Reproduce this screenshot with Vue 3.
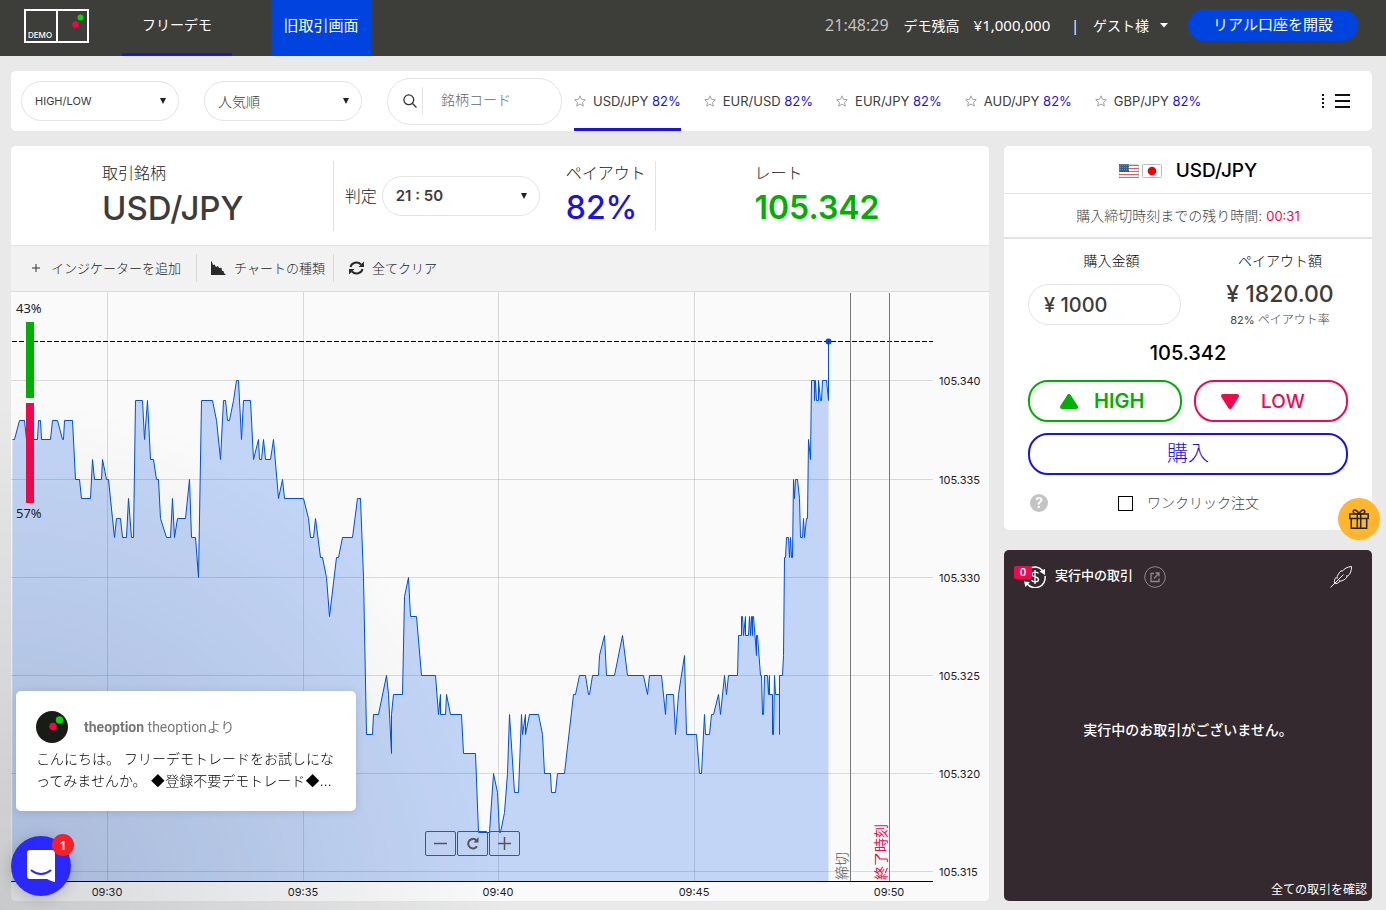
<script setup>
import { ref } from 'vue'

const pairs = ['USD/JPY', 'EUR/USD', 'EUR/JPY', 'AUD/JPY', 'GBP/JPY']
const amount = ref('¥ 1000')
const query = ref('')
const oneClick = ref(false)

// Plot space: x runs LEFT..LEFT+WIDTH, prices are thousandths above 105.
const LEFT = 11
const WIDTH = 922
const HEIGHT = 589
const yOf = (p) => Math.floor(88.9 + (340 - p) * 19.62) + 0.5

const series = `12 337,14 337,19 338,24 338,26 337,37 337,38 338,40 338,41 337,50 337,52 338,57 338,62 337,63 337,64 338,72 338,
75 335,79 335,81 334,90 334,92 336,94 335,101 335,102 336,106 335,108 335,112 333,114 332,116 333,120 333,122 332,126 332,128 334,
131 332,133 332,135 339,142 339,144 337,147 339,150 336,153 336,156 335,158 335,160 333,166 332,170 332,172 334,174 332,177 333,
185 333,189 335,191 332,195 332,198 330,201 339,212 339,216 338,220 336,223 339,225 339,227 338,229 338,233 339,236 340,238 340,
241 337,243 339,250 339,253 336,258 337,259 336,261 336,263 337,265 336,270 336,273 337,278 334,282 335,284 334,303 334,308 333,
310 332,313 332,315 333,320 331,322 331,326 330,329 328,336 331,338 331,342 332,352 332,357 334,360 334,363 330,366 322,372 322,
373 323,378 323,386 325,388 324,391 321,391 323,393 324,402 324,404 329,408 330,410 328,416 328,421 325,435 325,438 323,440 324,
440 323,445 323,446 324,450 323,461 323,463 321,475 321,478 317,489 317,493 320,497 319,499 317,500 317,504 318,507 320,509 323,
514 319,518 319,521 323,522 322,525 323,525 322,529 323,538 323,542 322,544 320,550 320,551 319,555 319,557 320,564 320,573 324,
575 324,579 325,585 325,588 324,589 324,592 325,598 325,599 326,604 327,606 325,614 325,622 327,627 325,643 325,647 324,649 325,
661 325,665 323,666 324,673 324,675 322,678 324,684 326,686 322,696 322,699 320,701 320,704 323,705 322,709 322,711 323,713 323,
718 324,720 323,724 325,726 324,728 325,737 325,738 327,741 327,741 328,742 328,743 327,745 328,745 327,748 327,749 328,750 327,
751 328,752 327,752 328,753 328,756 326,756 327,757 327,760 325,761 325,762 323,763 323,764 325,767 325,768 324,769 325,769 324,
772 324,772 322,773 322,774 325,775 324,779 324,779 322,779 325,782 325,783 326,784 331,785 331,786 332,788 332,789 331,790 332,
791 331,792 331,793 335,794 334,795 335,797 335,799 334,800 332,802 332,803 333,804 332,806 333,807 333,808 337,810 336,811 340,
814 340,814 339,815 340,816 339,818 339,818 340,820 339,821 339,822 340,826 340,828 339,828 342`
  .split(',')
  .map((s) => s.trim().split(' ').map(Number))

const line = series.map(([x, p]) => `${x + 0.5},${yOf(p)}`).join(' ')
const area = `12,${HEIGHT} ${series.slice(0, -1).map(([x, p]) => `${x + 0.5},${yOf(p)}`).join(' ')} 828.5,${HEIGHT}`

const prices = [340, 335, 330, 325, 320, 315]
const times = [
  { x: 107, label: '09:30' },
  { x: 303, label: '09:35' },
  { x: 498, label: '09:40' },
  { x: 694, label: '09:45' },
  { x: 889, label: '09:50' },
]
const marks = [
  { x: 850, label: '締切', kind: 'close' },
  { x: 889, label: '終了時刻', kind: 'end' },
]
const left = (x) => ({ left: `${((x - LEFT) / WIDTH) * 100}%` })
const top = (p) => ({ top: `${(yOf(p) / HEIGHT) * 100}%` })
</script>

<template>
  <div class="page">
    <header class="topbar">
      <a href="#" class="logo" aria-label="theoption demo">
        <svg width="65" height="34" viewBox="0 0 65 34">
          <rect x="1" y="1" width="63" height="32" fill="none" stroke="#fff" stroke-width="2" />
          <path d="M33 1v32" stroke="#fff" stroke-width="2" />
          <circle cx="51.500" cy="15.500" r="3.200" fill="#ff0046" />
          <circle cx="56.500" cy="8.500" r="3" fill="#00dc00" />
          <text x="4" y="29" class="logo-text">DEMO</text>
        </svg>
      </a>
      <nav class="nav">
        <a href="#" class="nav-demo">フリーデモ</a>
        <a href="#" class="nav-old">旧取引画面</a>
      </nav>
      <div class="account">
        <span class="clock">21:48:29</span>
        <span>デモ残高</span>
        <span class="balance">¥1,000,000</span>
        <span class="bar">|</span>
        <button class="guest" type="button">
          ゲスト様
          <svg width="8" height="5" viewBox="0 0 8 5"><path d="M0 0h8L4 4.500z" fill="#fff" /></svg>
        </button>
        <a href="#" class="open-account">リアル口座を開設</a>
      </div>
    </header>

    <main class="main">
      <section class="filters">
        <label class="pill">
          <select aria-label="取引の種類"><option>HIGH/LOW</option></select>
          <svg class="arrow" width="6" height="6" viewBox="0 0 6 6"><path d="M0 0h6L3 6z" fill="#222" /></svg>
        </label>
        <label class="pill sort">
          <select aria-label="並び順"><option>人気順</option></select>
          <svg class="arrow" width="6" height="6" viewBox="0 0 6 6"><path d="M0 0h6L3 6z" fill="#222" /></svg>
        </label>
        <label class="search">
          <svg width="14" height="14" viewBox="0 0 14 14" fill="none" stroke="#333" stroke-width="1.300">
            <circle cx="5.800" cy="5.800" r="4.900" /><path d="M9.500 9.500L13.500 13.500" />
          </svg>
          <input v-model="query" type="text" placeholder="銘柄コード" aria-label="銘柄コード" />
        </label>
        <nav class="tabs">
          <a v-for="(p, i) in pairs" :key="p" href="#" class="tab" :class="{ active: i === 0 }">
            <svg width="12" height="12" viewBox="0 0 12 12">
              <path d="M6 .8l1.500 3.500 3.800.4-2.800 2.600.8 3.800L6 9.100l-3.300 2 .8-3.800L.7 4.700l3.800-.4z" fill="none" stroke="#a2a2a2" />
            </svg>
            <span>{{ p }} <b>82%</b></span>
          </a>
        </nav>
        <button class="menu" type="button" aria-label="メニュー">
          <svg width="29" height="14" viewBox="0 0 29 14" fill="#111">
            <path d="M1 0h2v2H1zM1 4h2v2H1zM1 8h2v2H1zM1 12h2v2H1zM14 0h15v2H14zM14 6h15v2H14zM14 12h15v2H14z" />
          </svg>
        </button>
      </section>

      <div class="columns">
        <section class="chart-card">
          <div class="summary">
            <div class="cell pair">
              <span class="cap">取引銘柄</span>
              <strong>USD/JPY</strong>
            </div>
            <div class="cell expiry">
              <label for="expiry" class="cap">判定</label>
              <div class="pill time">
                <select id="expiry"><option>21 : 50</option></select>
                <svg class="arrow" width="6" height="6" viewBox="0 0 6 6"><path d="M0 0h6L3 6z" fill="#222" /></svg>
              </div>
              <div class="payout">
                <span class="cap">ペイアウト</span>
                <strong>82%</strong>
              </div>
            </div>
            <div class="cell rate">
              <span class="cap">レート</span>
              <strong>105.342</strong>
            </div>
          </div>

          <div class="tools">
            <button type="button" class="indicator">
              <svg width="8" height="8" viewBox="0 0 8 8"><path d="M4 0v8M0 4h8" stroke="#333" /></svg>
              インジケーターを追加
            </button>
            <button type="button" class="kind">
              <svg width="15" height="14" viewBox="0 0 15 14">
                <path d="M0 0l1 1 1 3 1.500-.5L5 6l2-1 1 2 2.500-.3.500 3 1.500.3.500 2L15 14H0z" fill="#2a2a2a" />
              </svg>
              チャートの種類
            </button>
            <button type="button" class="clear">
              <svg width="15" height="14" viewBox="0 0 15 14" fill="none" stroke="#2a2a2a" stroke-width="2">
                <path d="M1.500 6A6 5.500 0 0 1 12 3.500M13.500 8A6 5.500 0 0 1 3 10.500" />
                <path d="M15 .5V6H9.500zM0 13.500V8h5.500z" fill="#2a2a2a" stroke="none" />
              </svg>
              全てクリア
            </button>
          </div>

          <div class="chart">
            <div class="plot">
              <svg class="graph" :viewBox="`${LEFT} 0 ${WIDTH} ${HEIGHT}`" preserveAspectRatio="none" role="img" aria-label="USD/JPY">
                <g class="grid">
                  <line v-for="p in prices" :key="p" x1="11" x2="933" :y1="yOf(p)" :y2="yOf(p)" />
                  <line v-for="t in times.slice(0, 4)" :key="t.x" :x1="t.x + 0.5" :x2="t.x + 0.5" y1="0" y2="589" />
                </g>
                <polygon :points="area" fill="#0050e6" fill-opacity="0.22" />
                <polyline :points="line" class="price-line" />
                <line class="now" x1="12" x2="933" :y1="yOf(342)" :y2="yOf(342)" />
                <line v-for="m in marks" :key="m.x" class="mark" :x1="m.x + 0.5" :x2="m.x + 0.5" y1="1" y2="589" />
                <circle cx="828.500" :cy="yOf(342)" r="3" fill="#0046dc" />
              </svg>
              <span v-for="m in marks" :key="m.label" class="mark-label" :class="m.kind" :style="left(m.x)">{{ m.label }}</span>
              <div class="sentiment">
                <span>43%</span>
                <i class="up"></i>
                <i class="down"></i>
                <span>57%</span>
              </div>
              <div class="zoom">
                <button type="button" aria-label="縮小">
                  <svg width="13" height="13" viewBox="0 0 13 13"><path d="M0 6.500h13" stroke="#555" stroke-width="1.500" /></svg>
                </button>
                <button type="button" aria-label="リセット">
                  <svg width="13" height="13" viewBox="0 0 13 13">
                    <path d="M10.300 3.200A4.800 4.800 0 1 0 11 9.300" fill="none" stroke="#555" stroke-width="2" />
                    <path d="M12.500 0v5.500H7.500z" fill="#555" />
                  </svg>
                </button>
                <button type="button" aria-label="拡大">
                  <svg width="13" height="13" viewBox="0 0 13 13"><path d="M0 6.500h13M6.500 0v13" stroke="#555" stroke-width="1.500" /></svg>
                </button>
              </div>
            </div>
            <div class="prices">
              <span v-for="p in prices" :key="p" :style="top(p)">105.{{ p }}</span>
            </div>
            <div class="times">
              <span v-for="t in times" :key="t.x" :style="left(t.x)">{{ t.label }}</span>
            </div>
          </div>
        </section>

        <aside class="side">
          <section class="order">
            <h2>
              <span class="flags">
                <svg width="20" height="14" viewBox="0 0 20 14">
                  <rect width="20" height="14" rx="1" fill="#fff" />
                  <path d="M0 1.500h20M0 4.500h20M0 7.500h20M0 10.500h20M0 13.500h20" stroke="#ee5560" />
                  <rect width="10" height="8" fill="#3a5a8c" />
                  <path d="M1 1.500h9M1 3.500h9M1 5.500h9" stroke="#7389ae" stroke-dasharray="1 1" />
                  <rect x=".5" y=".5" width="19" height="13" rx="1" fill="none" stroke="#999" stroke-opacity=".4" />
                </svg>
                <svg width="20" height="14" viewBox="0 0 20 14">
                  <rect x=".5" y=".5" width="19" height="13" rx="1" fill="#fff" stroke="#bbb" />
                  <circle cx="10" cy="7" r="4.300" fill="#f00000" />
                </svg>
              </span>
              USD/JPY
            </h2>
            <p class="countdown">購入締切時刻までの残り時間: <b>00:31</b></p>
            <div class="form">
              <div class="amounts">
                <div class="buy">
                  <label for="amount">購入金額</label>
                  <input id="amount" v-model="amount" type="text" />
                </div>
                <div class="return">
                  <span>ペイアウト額</span>
                  <strong>¥ 1820.00</strong>
                  <small><em>82%</em> ペイアウト率</small>
                </div>
              </div>
              <p class="quote">105.342</p>
              <div class="choices">
                <button type="button" class="high">
                  <svg width="18" height="15" viewBox="0 0 18 15"><path d="M9 2L16 13H2z" fill="#00af00" stroke="#00af00" stroke-width="4" stroke-linejoin="round" /></svg>
                  HIGH
                </button>
                <button type="button" class="low">
                  <svg width="18" height="15" viewBox="0 0 18 15"><path d="M9 13L16 2H2z" fill="#f2084e" stroke="#f2084e" stroke-width="4" stroke-linejoin="round" /></svg>
                  LOW
                </button>
              </div>
              <button type="button" class="purchase">購入</button>
              <div class="quick">
                <button type="button" class="help" aria-label="ヘルプ">?</button>
                <label><input v-model="oneClick" type="checkbox" />ワンクリック注文</label>
              </div>
            </div>
          </section>

          <section class="positions">
            <div class="positions-head">
              <span class="open-icon">
                <svg width="22" height="22" viewBox="0 0 22 22" fill="none" stroke="#fff" stroke-width="1.500">
                  <path d="M5 2.800A10 10 0 0 1 18.500 4.500M21 10A10 10 0 0 1 3 17.500" />
                  <path d="M15.500 5.500L21 3v6zM0 15.500l6 .5-4.500 5z" fill="#fff" stroke="none" />
                  <path d="M14.500 7.500C13.500 5.500 8 5.500 8 8.500c0 3 6.500 1.800 6.500 5 0 3-6 3-7 .5M11 4v14" stroke-width="1.300" />
                </svg>
                <b>0</b>
              </span>
              <h3>実行中の取引</h3>
              <button type="button" class="popout" aria-label="別ウィンドウ">
                <svg width="22" height="22" viewBox="0 0 22 22" fill="none" stroke="#8e878b">
                  <circle cx="11" cy="11" r="10.300" />
                  <path d="M10 7.500H7v8h8v-3M10 12.500l4.500-5M11.500 7h3.500v3.500" stroke-width="1.300" />
                </svg>
              </button>
              <svg class="feather" width="22" height="22" viewBox="0 0 22 22" fill="none" stroke="#f2f2f2">
                <path d="M.5 21.500L13.500 8.500M4.500 17.500C4 15.500 4.500 13 6 11.500l1 1c0-3 2-6 4.500-8l.5 1C14 2.500 18 .7 21.500.5c.3 4-1.200 7.500-3.700 9.500l-1.300-.2.700 1.200c-2 2.500-4.500 3.800-7 4.200l-1-.7.200 1.400c-1.500 1.400-3.200 1.900-4.900 1.600z" />
              </svg>
            </div>
            <p class="empty">実行中のお取引がございません。</p>
            <a href="#" class="all">全ての取引を確認</a>
          </section>
        </aside>
      </div>
    </main>

    <div class="shade"></div>

    <button type="button" class="gift" aria-label="プレゼント">
      <svg width="20" height="20" viewBox="0 0 20 20" fill="none" stroke="#2b2415" stroke-width="1.500">
        <path d="M.8 5h18.400v4.500H.8zM2.300 9.500h15.400v9.700H2.300zM8.300 5v14M11.700 5v14" />
        <path d="M10 5C8.500 1 4.500-.2 4.200 2.500 4.100 4 5.500 5 10 5zM10 5c1.500-4 5.500-5.200 5.800-2.500C15.900 4 14.500 5 10 5z" />
      </svg>
    </button>

    <a href="#" class="message">
      <span class="from">
        <svg width="32" height="32" viewBox="0 0 32 32">
          <circle cx="16" cy="16" r="16" fill="#191b16" />
          <circle cx="17" cy="15.500" r="3.700" fill="#ff0046" />
          <circle cx="23.500" cy="9" r="3.700" fill="#00dc00" />
        </svg>
        <span><b>theoption</b> theoptionより</span>
      </span>
      <span class="body">こんにちは。 フリーデモトレードをお試しになってみませんか。 ◆登録不要デモトレード◆…</span>
    </a>

    <button type="button" class="launcher" aria-label="チャットを開く">
      <svg width="28" height="32" viewBox="0 0 28 32">
        <path d="M3 0h22a3 3 0 0 1 3 3v29s-5-1.300-8-3H3a3 3 0 0 1-3-3V3a3 3 0 0 1 3-3z" fill="#fff" />
        <path d="M4.500 20.500c5.500 4.500 13.500 4.500 19 0" fill="none" stroke="#2a28ff" stroke-width="2" stroke-linecap="round" />
      </svg>
      <span>1</span>
    </button>
  </div>
</template>

<style>
body {
  background: #e9e9e9;
}
</style>

<style scoped>
.page {
  --ui: Inter, "Noto Sans CJK JP", sans-serif;
  --jp: "Noto Sans", "Noto Sans CJK JP", sans-serif;
  --line: #e3e3e3;
  display: flex;
  flex-direction: column;
  min-height: 100vh;
  font-family: var(--ui);
  font-size: 13px;
  color: #3c3c3b;
}
.page *,
.page {
  box-sizing: border-box;
}
h2, h3, p {
  margin: 0;
  font-weight: 400;
}
a {
  color: inherit;
  text-decoration: none;
}
button, select, input {
  font: inherit;
  color: inherit;
}
button {
  padding: 0;
  border: 0;
  background: none;
  cursor: pointer;
}
svg {
  display: block;
  flex: none;
}

.topbar {
  display: flex;
  height: 56px;
  padding: 0 28px 0 24px;
  background: #3d3d3a;
  color: #fff;
  font-family: var(--jp);
}
.logo {
  padding-top: 9px;
}
.logo-text {
  font: 500 8px Inter, sans-serif;
  fill: #fff;
}
.nav {
  display: flex;
  gap: 39px;
  margin-left: 33px;
  font-size: 15px;
  line-height: 50px;
}
.nav a {
  text-align: center;
}
.nav-demo {
  width: 110px;
  border-bottom: 3px solid #1a12e8;
  font-size: 14px;
}
.nav-old {
  width: 100px;
  background: #0043df;
}
.account {
  display: flex;
  align-items: center;
  height: 50px;
  margin-left: auto;
  font-size: 14px;
  white-space: nowrap;
}
.clock {
  margin-right: 15px;
  color: #c2c2c0;
  font-size: 16px;
}
.balance {
  margin: 0 21px 0 14px;
  font-size: 15px;
}
.guest {
  display: flex;
  align-items: center;
  gap: 11px;
  margin: 0 20px 0 14px;
}
.open-account {
  width: 170px;
  height: 32px;
  border-radius: 16px;
  background: #0043df;
  font-size: 15px;
  line-height: 30px;
  text-align: center;
}

.main {
  display: flex;
  flex: 1;
  flex-direction: column;
  gap: 15px;
  padding: 15px 14px 9px 11px;
}
.filters {
  display: flex;
  align-items: center;
  height: 60px;
  padding: 0 22px 0 10px;
  border-radius: 5px;
  background: #fff;
}
.pill {
  position: relative;
  width: 158px;
  height: 40px;
}
.pill select {
  width: 100%;
  height: 100%;
  padding: 0 13px;
  border: 1px solid var(--line);
  border-radius: 20px;
  background: #fff;
  appearance: none;
  font-size: 11px;
}
.pill.sort {
  margin: 0 25px;
}
.pill.sort select {
  font-size: 14px;
  font-weight: 300;
}
.pill .arrow {
  position: absolute;
  top: 17px;
  right: 13px;
  pointer-events: none;
}
.search {
  display: flex;
  align-items: center;
  width: 175px;
  height: 47px;
  margin-right: 12px;
  padding-left: 15px;
  border: 1px solid var(--line);
  border-radius: 24px;
}
.search input {
  width: 120px;
  height: 28px;
  margin-left: 5px;
  padding: 0 0 4px 18px;
  border: 0;
  border-left: 1px solid var(--line);
  outline: 0;
  background: none;
  font-size: 14px;
}
.search input::placeholder {
  color: #666;
  font-weight: 300;
}
.tabs {
  display: flex;
  gap: 23px;
  height: 100%;
}
.tab {
  display: flex;
  align-items: center;
  gap: 7px;
  padding-top: 3px;
  border-bottom: 3px solid transparent;
  font-size: 13px;
  white-space: nowrap;
}
.tab b {
  color: #1a12e8;
  font-weight: 400;
}
.tab.active {
  border-color: #1a12e8;
}
.menu {
  margin-left: auto;
}

.columns {
  display: grid;
  flex: 1;
  grid-template-columns: minmax(0, 1fr) 368px;
  gap: 15px;
}
.chart-card {
  display: flex;
  flex-direction: column;
  overflow: hidden;
  border-radius: 5px;
  background: #fff;
}
.summary {
  display: grid;
  grid-template-columns: 33fr 33fr 34fr;
  padding: 15px 0;
  height: 99px;
}
.cell {
  display: flex;
  border-right: 1px solid var(--line);
  line-height: 24px;
}
.cap {
  display: block;
  color: #222;
  font-size: 16px;
  font-weight: 300;
}
.cell strong {
  display: block;
  font-size: 32px;
  font-weight: 500;
  line-height: 46px;
}
.pair, .rate {
  flex-direction: column;
}
.pair {
  padding-left: 91px;
}
.cell.pair strong {
  font-size: 33px;
}
.expiry {
  align-items: center;
  padding-left: 11px;
}
.time {
  flex: none;
  margin: 0 26px 0 5px;
}
.time select {
  font-size: 15px;
  font-weight: 600;
}
.payout {
  align-self: flex-start;
  white-space: nowrap;
}
.payout strong {
  color: #1a12e8;
}
.rate {
  padding-left: 98px;
  border: 0;
}
.cell.rate strong {
  color: #00af00;
  font-weight: 600;
}
.tools {
  display: flex;
  align-items: center;
  height: 47px;
  padding: 0 0 2px 21px;
  border-top: 1px solid var(--line);
  border-bottom: 1px solid #dcdcdc;
  background: #f2f2f2;
}
.tools button {
  display: flex;
  align-items: center;
  height: 28px;
  padding-right: 8px;
  border-right: 1px solid #d9d9d9;
  color: #222;
  font-weight: 300;
  white-space: nowrap;
}
.tools .indicator {
  gap: 11px;
  padding-right: 15px;
}
.tools .kind {
  gap: 8px;
  padding-left: 14px;
}
.tools .clear {
  gap: 8px;
  padding-left: 15px;
  border: 0;
}
.chart {
  display: grid;
  flex: 1;
  grid-template-columns: minmax(0, 1fr) 56px;
  grid-template-rows: minmax(0, 1fr) 19px;
  min-height: 400px;
  background: #fafafa;
  color: #222;
}
.plot {
  position: relative;
  border-bottom: 1px solid #000;
}
.graph {
  position: absolute;
  width: 100%;
  height: 100%;
}
.graph line, .graph polyline {
  vector-effect: non-scaling-stroke;
}
.grid line {
  stroke: #000;
  stroke-opacity: 0.13;
}
.price-line {
  fill: none;
  stroke: #0050dc;
  stroke-width: 1px;
}
.now {
  stroke: #000;
  stroke-dasharray: 5 2;
}
.mark {
  stroke: #777;
}
.mark-label {
  position: absolute;
  bottom: 1px;
  margin-left: -15px;
  color: #555;
  font-size: 14px;
  font-weight: 300;
  line-height: 14px;
  text-orientation: sideways;
  white-space: nowrap;
  writing-mode: vertical-rl;
  transform: rotate(180deg);
}
.mark-label.end {
  color: #f2084e;
  font-weight: 400;
}
.sentiment {
  position: absolute;
  top: 8px;
  left: 5px;
  width: 28px;
  font-family: var(--jp);
  font-size: 13px;
  line-height: 17px;
}
.sentiment i {
  display: block;
  width: 8px;
  margin: 5px 10px;
}
.sentiment .up {
  height: 76px;
  background: #00af00;
}
.sentiment .down {
  height: 100px;
  margin-bottom: 2px;
  background: #f2084e;
}
.zoom {
  position: absolute;
  right: 0;
  bottom: 25px;
  left: 1px;
  display: flex;
  justify-content: center;
  gap: 1px;
}
.zoom button {
  display: grid;
  width: 31px;
  height: 25px;
  place-items: center;
  border: 1px solid #555;
  border-radius: 2px;
}
.prices {
  position: relative;
}
.prices span {
  position: absolute;
  left: 6px;
  font-size: 11px;
  line-height: 18px;
  transform: translateY(-50%);
}
.times {
  position: relative;
}
.times span {
  position: absolute;
  top: 2px;
  font-size: 11px;
  line-height: 16px;
  transform: translateX(-50%);
}

.side {
  display: flex;
  flex-direction: column;
  gap: 20px;
}
.order {
  border-radius: 5px;
  background: #fff;
  text-align: center;
}
.order h2 {
  display: flex;
  align-items: center;
  justify-content: center;
  gap: 14px;
  height: 48px;
  padding-top: 2px;
  border-bottom: 1px solid var(--line);
  color: #000;
  font-size: 19px;
  font-weight: 500;
}
.flags {
  display: flex;
  gap: 3px;
}
.countdown {
  height: 45px;
  border-bottom: 2px solid var(--line);
  color: #444;
  font-size: 14px;
  font-weight: 300;
  line-height: 44px;
}
.countdown b {
  color: #f2084e;
  font-size: 13px;
  font-weight: 400;
}
.form {
  padding: 12px 24px 13px;
}
.amounts {
  display: flex;
  justify-content: space-between;
  color: #000;
  font-size: 14px;
  font-weight: 300;
  line-height: 20px;
}
.buy {
  width: 153px;
}
.buy label {
  display: block;
  padding-left: 14px;
  text-align: center;
}
.buy input {
  width: 100%;
  height: 41px;
  margin-top: 13px;
  padding: 1px 15px 0;
  border: 1px solid var(--line);
  border-radius: 21px;
  outline: 0;
  color: #3c3c3b;
  font-size: 20px;
  font-weight: 500;
  text-align: left;
}
.return {
  display: flex;
  flex-direction: column;
  width: 136px;
}
.return strong {
  margin-top: 8px;
  color: #3c3c3b;
  font-size: 23px;
  font-weight: 500;
  line-height: 30px;
}
.return small {
  margin-top: 1px;
  color: #444;
  font-size: 12px;
}
.return em {
  font-size: 11px;
  font-style: normal;
  font-weight: 400;
}
.quote {
  margin-top: 11px;
  color: #000;
  font-size: 20px;
  font-weight: 500;
  line-height: 24px;
}
.choices {
  display: flex;
  gap: 12px;
  margin-top: 15px;
}
.choices button {
  display: flex;
  width: 50%;
  align-items: center;
  height: 42px;
  padding-left: 30px;
  border: 2px solid #00af00;
  border-radius: 20px;
  color: #00af00;
  font-size: 20px;
  font-weight: 600;
}
.choices .high {
  gap: 16px;
}
.choices .low {
  gap: 22px;
  padding-left: 25px;
  border-color: #f2084e;
  color: #f2084e;
  font-size: 19px;
  font-weight: 500;
}
.purchase {
  display: block;
  width: 100%;
  height: 42px;
  margin-top: 11px;
  border: 2px solid #1a12e8;
  border-radius: 20px;
  padding-bottom: 2px;
  color: #1a12e8;
  font-size: 21px;
  font-weight: 300;
  line-height: 34px;
}
.quick {
  display: flex;
  align-items: center;
  height: 28px;
  margin-top: 14px;
  padding-left: 2px;
  color: #444;
  font-size: 14px;
  font-weight: 300;
}
.help {
  width: 18px;
  height: 18px;
  border-radius: 50%;
  background: #c4c4c4;
  color: #fff;
  font-size: 14px;
  font-weight: 600;
  line-height: 18px;
}
.quick label {
  display: flex;
  align-items: center;
  gap: 14px;
  margin-left: 70px;
  line-height: 18px;
}
.quick input {
  width: 15px;
  height: 15px;
  margin: 0;
  border: 1px solid #000;
  background: #fff;
  appearance: none;
}
.quick input:checked {
  background: #1a12e8;
}

.positions {
  display: flex;
  flex: 1;
  flex-direction: column;
  border-radius: 5px;
  background: #33292f;
  color: #fff;
  font-size: 13px;
}
.positions-head {
  display: flex;
  align-items: center;
  height: 54px;
  padding: 0 20px;
}
.open-icon {
  position: relative;
}
.open-icon b {
  position: absolute;
  top: 0;
  left: -10px;
  width: 18px;
  border-radius: 2px;
  background: #f2084e;
  font-size: 10px;
  font-weight: 600;
  line-height: 13px;
  text-align: center;
}
.positions h3 {
  margin: 0 11px 0 9px;
  padding-bottom: 4px;
  font-size: 13px;
  font-weight: 500;
  line-height: 20px;
}
.feather {
  margin-left: auto;
}
.empty {
  margin: auto;
  padding-bottom: 26px;
  font-size: 14px;
  font-weight: 500;
}
.all {
  align-self: flex-end;
  padding: 0 5px 2px;
  font-size: 12px;
  line-height: 19px;
}

.shade {
  position: fixed;
  bottom: 0;
  left: 0;
  width: 500px;
  height: 500px;
  background: radial-gradient(ellipse at bottom left, rgba(29, 39, 54, 0.16) 0, rgba(29, 39, 54, 0) 72%);
  pointer-events: none;
}
.gift {
  position: fixed;
  right: 6px;
  top: 498px;
  display: grid;
  width: 42px;
  height: 42px;
  place-items: center;
  border-radius: 50%;
  background: #ffb52e;
}
.message {
  position: fixed;
  bottom: 99px;
  left: 16px;
  width: 340px;
  height: 120px;
  padding: 20px;
  border-radius: 5px;
  background: #fff;
  box-shadow: 0 1px 8px rgba(0, 0, 0, 0.12);
  color: #000;
  font-size: 14px;
  font-weight: 300;
  line-height: 22px;
}
.from {
  display: flex;
  align-items: center;
  gap: 16px;
  margin-bottom: 5px;
  color: #777;
  font-family: Roboto, "Noto Sans CJK JP", sans-serif;
  font-weight: 400;
}
.from b {
  font-weight: 700;
}
.body {
  display: block;
}
.launcher {
  position: fixed;
  bottom: 14px;
  left: 11px;
  display: grid;
  width: 60px;
  height: 60px;
  place-items: center;
  border-radius: 50%;
  background: #2a28ff;
  box-shadow: 0 2px 14px rgba(0, 0, 0, 0.2);
}
.launcher span {
  position: absolute;
  top: -2px;
  right: -3px;
  width: 22px;
  height: 22px;
  border-radius: 50%;
  background: #f71f28;
  color: #fff;
  font-family: var(--jp);
  font-size: 13px;
  font-weight: 600;
  line-height: 22px;
}
</style>
